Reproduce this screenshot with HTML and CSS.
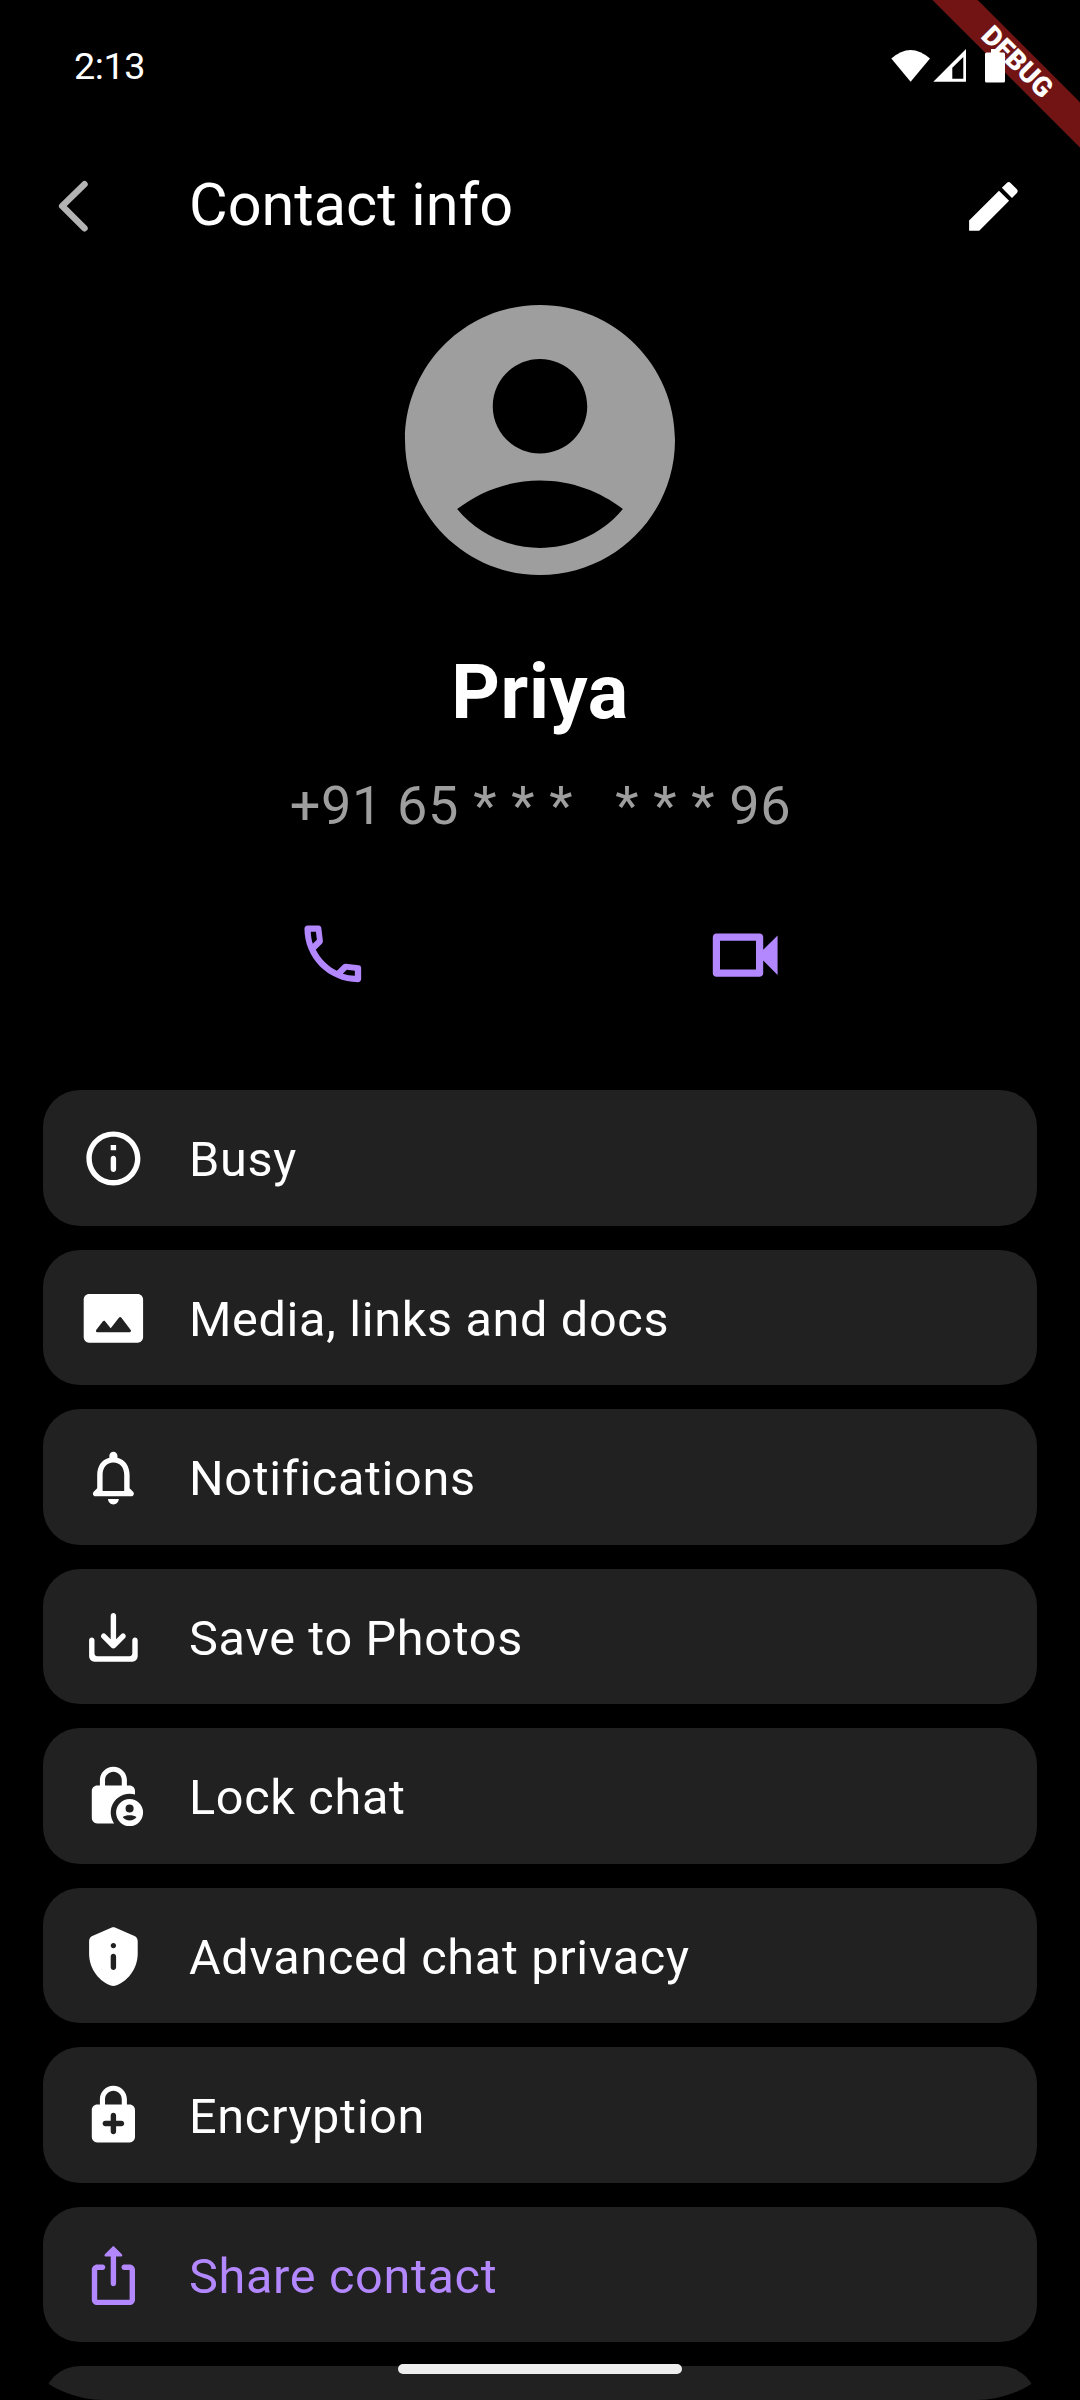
FILE: index.html
```html
<!DOCTYPE html>
<html lang="en">
<head>
<meta charset="utf-8">
<title>Contact info</title>
<link rel="stylesheet" href="styles.css">
</head>
<body>
<div class="screen">
  <header class="status-bar">
    <span class="clock">2:13</span>
    <svg class="status-icons" viewBox="0 0 115 36" fill="#fff">
      <path d="M0.3 10.6Q19.6-6.6 39 10.6L19.6 33.7z"/>
      <path fill-rule="evenodd" d="M42.3 33.7L75 1v32.700zM61.300 19.700v11H72.300V9z"/>
      <path d="M100 1h8v3.500h4.500q1.500 0 1.500 1.500v27q0 1.500-1.500 1.500h-17q-1.500 0-1.500-1.500V6q0-1.500 1.500-1.500h4.500z"/>
    </svg>
  </header>

  <nav class="app-bar">
    <svg class="back" viewBox="0 0 36 56"><path d="M30.500 6.200L8.200 28 30.500 50.200"/></svg>
    <h1 class="title">Contact info</h1>
    <svg class="icon edit" viewBox="0 0 24 24"><path d="M3 17.25V21h3.75L17.81 9.94l-3.75-3.75L3 17.25zM20.71 7.04c.39-.39.39-1.02 0-1.41l-2.34-2.34c-.39-.39-1.02-.39-1.41 0l-1.83 1.83 3.75 3.75 1.83-1.83z"/></svg>
  </nav>

  <section class="profile">
    <svg class="avatar" viewBox="0 0 24 24"><path d="M12 2C6.480 2 2 6.480 2 12s4.480 10 10 10 10-4.480 10-10S17.520 2 12 2zm0 4c1.930 0 3.500 1.570 3.500 3.500S13.930 13 12 13s-3.500-1.570-3.500-3.500S10.070 6 12 6zm0 14c-2.030 0-4.430-.82-6.140-2.880C7.550 15.800 9.680 15 12 15s4.450.8 6.140 2.120C16.430 19.180 14.030 20 12 20z"/></svg>
    <h2 class="name">Priya</h2>
    <p class="number">+91 65 * * *   * * * 96</p>
    <div class="actions">
      <svg class="call" viewBox="0 0 24 24"><path fill-rule="evenodd" d="M4 3h3.500c.45 0 .8.3.85.75l.5 4.100c.03.3-.05.6-.25.85L6.600 10.700c1.450 2.850 3.850 5.250 6.700 6.700l2-2c.25-.2.55-.28.85-.25l4.100.5c.45.05.75.4.75.85V20c0 .55-.45 1-1 1C10.600 21 3 13.400 3 4c0-.55.45-1 1-1zM5 5c.05 1.330.27 2.600.65 3.830L6.950 7.550 6.650 5zM19 19v-1.650l-2.550-.3-1.280 1.300C16.400 18.730 17.670 18.950 19 19z"/></svg>
      <svg class="video" viewBox="0 0 24 24"><path d="M15 8v8H5V8h10m1-2H4c-.55 0-1 .45-1 1v10c0 .55.45 1 1 1h12c.55 0 1-.45 1-1v-3.500l4 4v-11l-4 4V7c0-.55-.45-1-1-1z"/></svg>
    </div>
  </section>

  <ul class="options">
    <li class="option">
      <svg class="icon" viewBox="0 0 24 24"><path d="M11 7h2v2h-2V7zm1 10c.55 0 1-.45 1-1v-4c0-.55-.45-1-1-1s-1 .45-1 1v4c0 .55.45 1 1 1zm0-15C6.480 2 2 6.480 2 12s4.480 10 10 10 10-4.480 10-10S17.520 2 12 2zm0 18c-4.410 0-8-3.590-8-8s3.590-8 8-8 8 3.590 8 8-3.590 8-8 8z"/></svg>
      <span class="label">Busy</span>
    </li>
    <li class="option">
      <svg class="icon" viewBox="0 0 24 24"><path fill-rule="evenodd" d="M21 3H3c-1.100 0-2 .9-2 2v14c0 1.100.9 2 2 2h18c1.100 0 2-.9 2-2V5c0-1.100-.9-2-2-2zM5.630 16.300l2.490-3.200c.2-.25.58-.26.78-.01l2.100 2.530 3.100-3.990c.2-.26.6-.26.8.01l3.510 4.680c.25.33.01.8-.4.800H6.020c-.42-.01-.65-.49-.39-.82z"/></svg>
      <span class="label">Media, links and docs</span>
    </li>
    <li class="option">
      <svg class="icon" viewBox="0 0 24 24"><path d="M12 22c1.100 0 2-.9 2-2h-4c0 1.100.9 2 2 2zm6-6v-5c0-3.070-1.630-5.640-4.500-6.320V4c0-.83-.67-1.500-1.500-1.500s-1.500.67-1.500 1.500v.68C7.640 5.360 6 7.920 6 11v5l-1.290 1.290c-.63.63-.19 1.710.7 1.710h13.170c.89 0 1.340-1.080.71-1.710L18 16zm-2 1H8v-6c0-2.480 1.510-4.500 4-4.500s4 2.020 4 4.500v6z"/></svg>
      <span class="label">Notifications</span>
    </li>
    <li class="option">
      <svg class="icon" viewBox="0 0 24 24"><path d="M19 13v5c0 .55-.45 1-1 1H6c-.55 0-1-.45-1-1v-5c0-.55-.45-1-1-1s-1 .45-1 1v6c0 1.100.9 2 2 2h14c1.100 0 2-.9 2-2v-6c0-.55-.45-1-1-1s-1 .45-1 1zM13 12.670l1.880-1.880c.39-.39 1.020-.39 1.410 0 .39.39.39 1.020 0 1.410l-3.590 3.590c-.39.39-1.020.39-1.410 0L7.700 12.200c-.39-.39-.39-1.020 0-1.410.39-.39 1.020-.39 1.410 0L11 12.670V4c0-.55.45-1 1-1s1 .45 1 1v8.670z"/></svg>
      <span class="label">Save to Photos</span>
    </li>
    <li class="option">
      <svg class="icon" viewBox="0 0 24 24"><path fill-rule="evenodd" d="M20 11.290V10c0-1.100-.9-2-2-2h-1V6c0-2.760-2.240-5-5-5S7 3.240 7 6v2H6c-1.100 0-2 .9-2 2v10c0 1.100.9 2 2 2h6.260A7 7 0 0 1 20 11.290zM8.900 8V6c0-1.710 1.390-3.100 3.100-3.100s3.100 1.390 3.100 3.100v2z"/><path fill-rule="evenodd" d="M18 13a5 5 0 1 0 0 10 5 5 0 0 0 0-10zm0 2a1.500 1.500 0 1 1 0 3 1.500 1.500 0 0 1 0-3zm-2.560 4.650c.66-.45 1.560-.65 2.560-.65s1.900.2 2.560.65C20 20.500 19 20.950 18 20.950s-2-.45-2.560-1.300z"/></svg>
      <span class="label">Lock chat</span>
    </li>
    <li class="option">
      <svg class="icon" viewBox="0 0 24 24"><path fill-rule="evenodd" d="M4.190 4.470C3.470 4.790 3 5.510 3 6.300V11c0 5.550 3.840 10.740 9 12 5.160-1.260 9-6.450 9-12V6.300c0-.79-.47-1.510-1.190-1.830l-7-3.110c-.52-.23-1.110-.23-1.620 0l-7 3.110zM12 7c.55 0 1 .45 1 1s-.45 1-1 1-1-.45-1-1 .45-1 1-1zm0 4c.55 0 1 .45 1 1v4c0 .55-.45 1-1 1s-1-.45-1-1v-4c0-.55.45-1 1-1z"/></svg>
      <span class="label">Advanced chat privacy</span>
    </li>
    <li class="option">
      <svg class="icon" viewBox="0 0 24 24"><path fill-rule="evenodd" d="M18 8h-1V6c0-2.760-2.240-5-5-5S7 3.240 7 6v2H6c-1.100 0-2 .9-2 2v10c0 1.100.9 2 2 2h12c1.100 0 2-.9 2-2V10c0-1.100-.9-2-2-2zM8.900 6c0-1.710 1.390-3.100 3.100-3.100s3.100 1.390 3.100 3.100v2H8.900V6zM15 16h-2v2c0 .55-.45 1-1 1s-1-.45-1-1v-2H9c-.55 0-1-.45-1-1s.45-1 1-1h2v-2c0-.55.45-1 1-1s1 .45 1 1v2h2c.55 0 1 .45 1 1s-.45 1-1 1z"/></svg>
      <span class="label">Encryption</span>
    </li>
    <li class="option option-accent">
      <svg class="icon" viewBox="0 0 24 24"><path d="M18 8h-2c-.55 0-1 .45-1 1s.45 1 1 1h2v11H6V10h2c.55 0 1-.45 1-1s-.45-1-1-1H6c-1.100 0-2 .9-2 2v11c0 1.110.89 2 2 2h12c1.100 0 2-.9 2-2V10c0-1.100-.9-2-2-2zM12 16c.55 0 1-.45 1-1V5h1.790c.45 0 .67-.54.35-.85l-2.790-2.790c-.2-.2-.51-.2-.71 0L8.850 4.150c-.31.31-.09.85.36.85H11v10c0 .55.45 1 1 1z"/></svg>
      <span class="label">Share contact</span>
    </li>
    <li class="option"></li>
  </ul>

  <div class="debug-banner">DEBUG</div>
  <div class="home-indicator"></div>
</div>
</body>
</html>
```
FILE: styles.css
```css
* { box-sizing: border-box; }

body {
  margin: 0;
  background: #000;
}

h1, h2, p, ul { margin: 0; padding: 0; }

svg { display: block; flex: none; }

.screen {
  position: relative;
  width: 1080px;
  height: 2400px;
  overflow: hidden;
  border-radius: 104px;
  background: #000;
  color: #fff;
  font-family: Roboto, "Noto Sans", sans-serif;
}

.status-bar {
  position: relative;
  z-index: 2;
  display: flex;
  justify-content: space-between;
  align-items: center;
  height: 132px;
  padding: 0 74px;
}

.clock {
  font-size: 37.8px;
  line-height: 44px;
  letter-spacing: -0.500px;
}

.status-icons { width: 115px; height: 36px; }

.app-bar {
  display: flex;
  align-items: center;
  height: 145.500px;
  padding: 0 54px;
}

.back {
  width: 36px;
  height: 56px;
  margin-top: 3px;
  fill: none;
  stroke: #b3b3b3;
  stroke-width: 6.500px;
  stroke-linecap: round;
  stroke-linejoin: round;
}

.title {
  flex: 1;
  margin-left: 99px;
  font-size: 59.400px;
  font-weight: 400;
  line-height: 70px;
}

.icon {
  width: 64.800px;
  height: 64.800px;
  fill: currentColor;
}

.edit { margin-top: 3px; }

.profile {
  display: flex;
  flex-direction: column;
  align-items: center;
}

.avatar {
  width: 324px;
  height: 324px;
  fill: #9e9e9e;
}

.name {
  margin-top: 45.700px;
  font-size: 75.600px;
  font-weight: 700;
  line-height: 90px;
  letter-spacing: 0.675px;
}

.number {
  margin-top: 37.300px;
  padding-left: 1px;
  color: #9e9e9e;
  font-size: 54px;
  line-height: 64px;
  letter-spacing: 0.675px;
  white-space: pre;
}

.actions {
  display: flex;
  align-items: center;
  gap: 332.200px;
  height: 86.400px;
  margin-top: 73.400px;
  padding-left: 3.400px;
  fill: #b388ff;
}

.call {
  width: 75.600px;
  height: 75.600px;
  margin-bottom: 2px;
}

.video { width: 86.400px; height: 86.400px; }

.options {
  display: flex;
  flex-direction: column;
  gap: 24px;
  margin-top: 92.100px;
  padding: 0 43.200px;
  list-style: none;
}

.option {
  display: flex;
  flex: none;
  align-items: center;
  gap: 43.200px;
  height: 135.500px;
  padding: 1px 37.800px 0;
  border-radius: 37px;
  background: #212121;
}

.option-accent { color: #b388ff; }

.label {
  padding-top: 3px;
  font-size: 48.600px;
  line-height: 58px;
  letter-spacing: 0.675px;
}

.debug-banner {
  position: absolute;
  top: 46px;
  left: 866.500px;
  width: 300px;
  height: 32.400px;
  background: #721414;
  font-size: 27.500px;
  font-weight: 900;
  line-height: 32.400px;
  text-align: center;
  transform: rotate(45deg);
}

.home-indicator {
  position: absolute;
  bottom: 26px;
  left: 398px;
  width: 284px;
  height: 10px;
  border-radius: 5px;
  background: #eee;
}
```
